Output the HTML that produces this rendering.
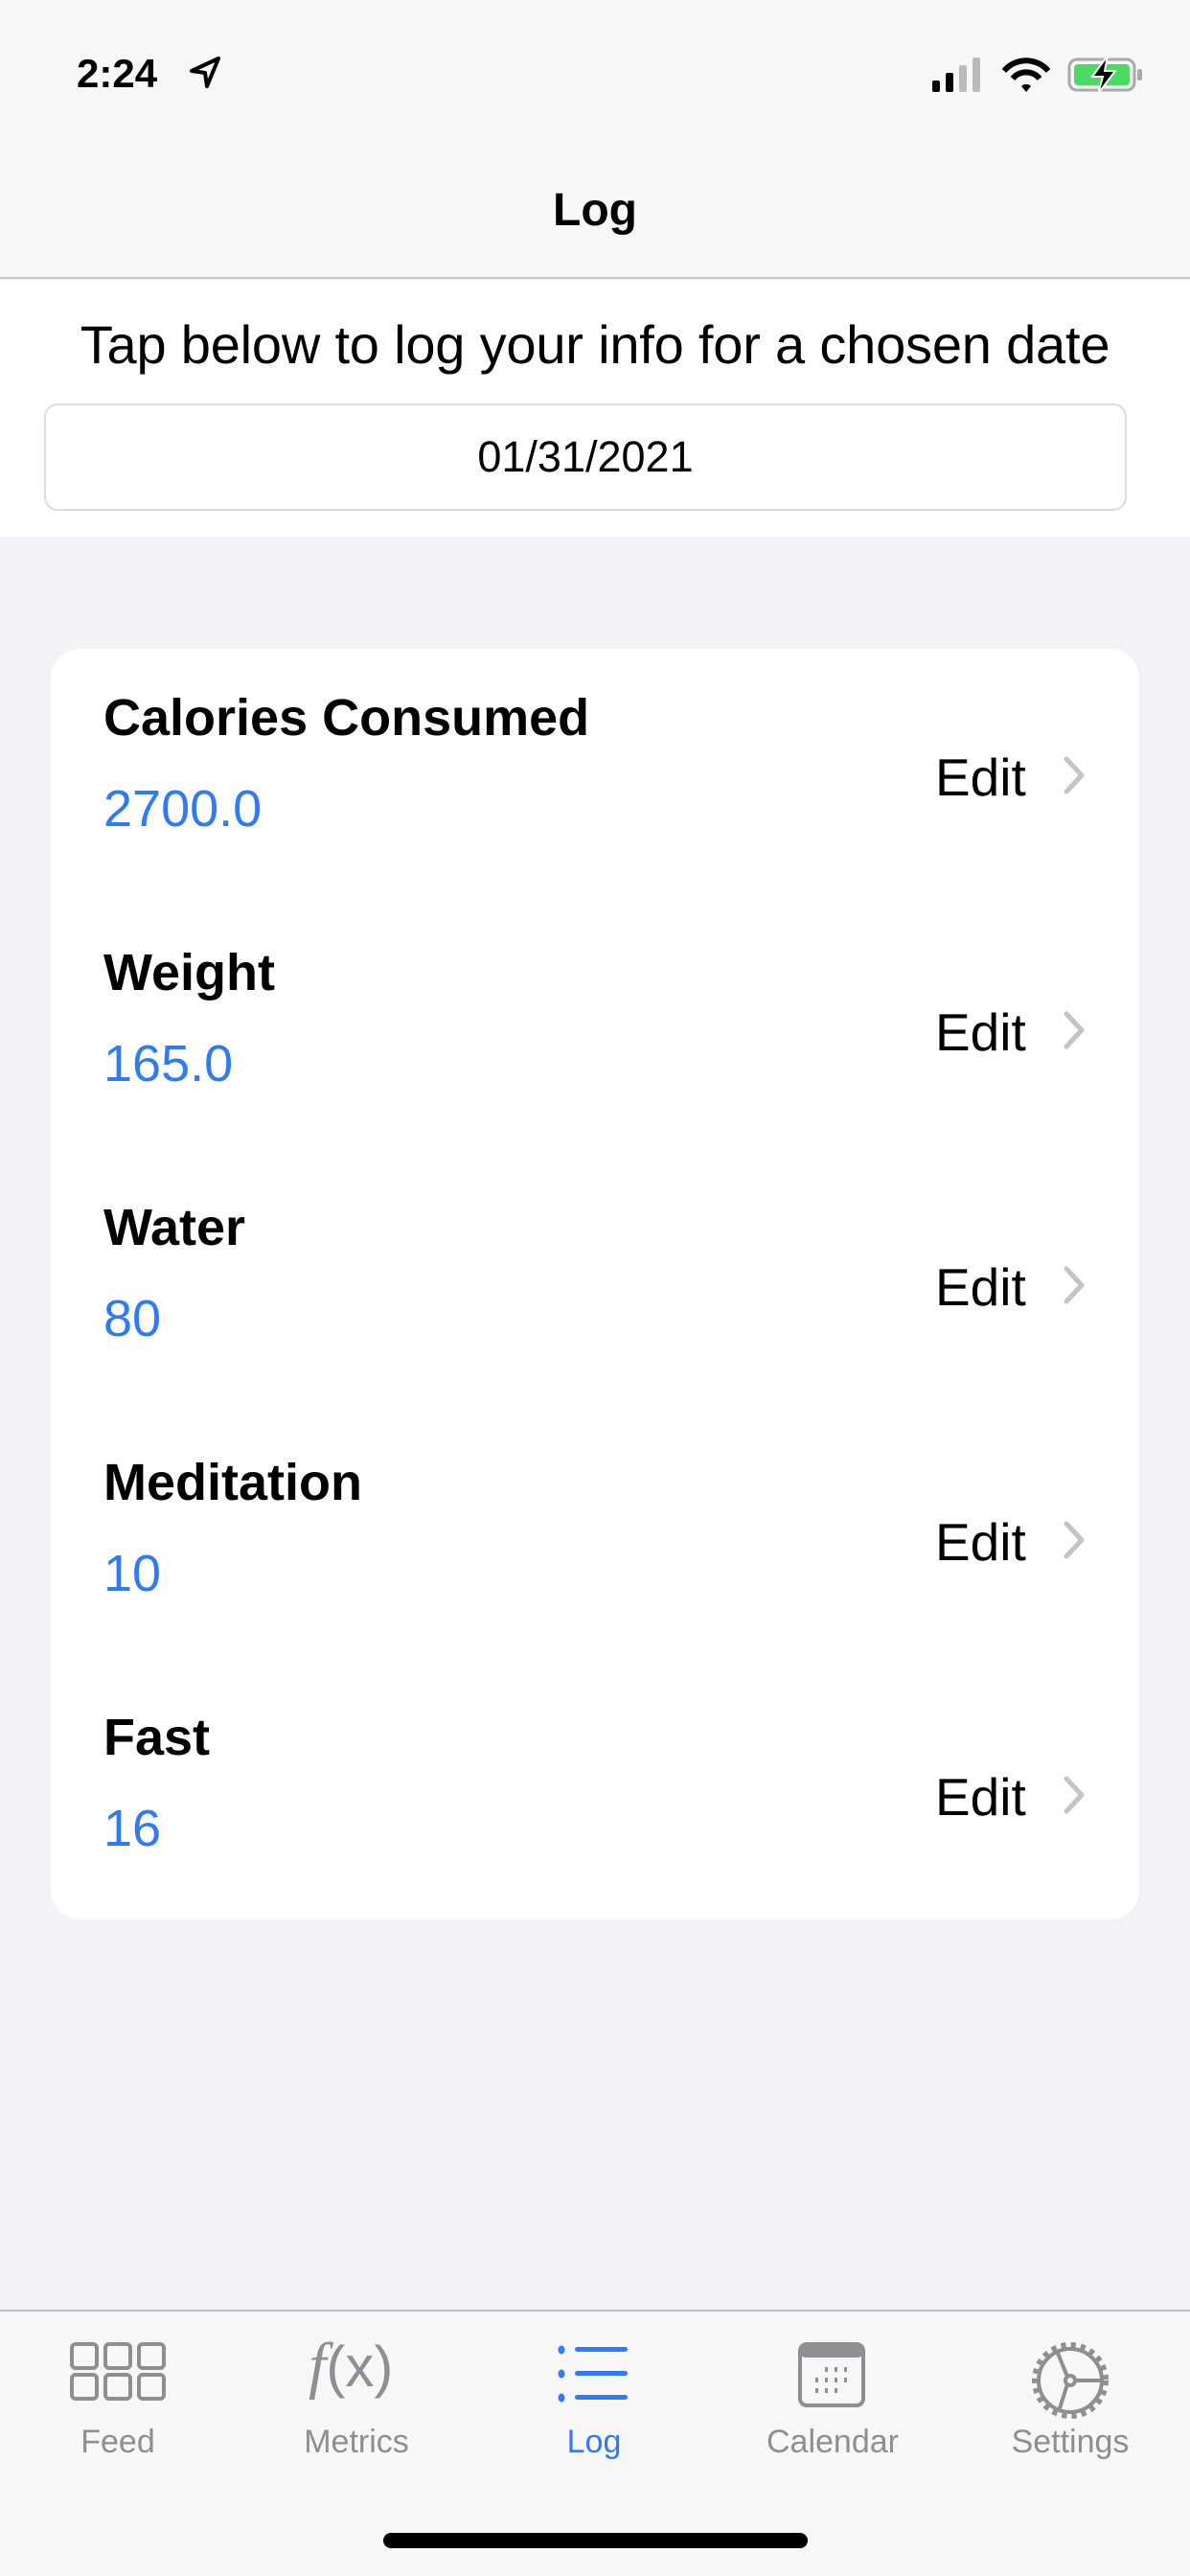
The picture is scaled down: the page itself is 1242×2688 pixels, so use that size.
<!DOCTYPE html>
<html><head><meta charset="utf-8"><style>
*{margin:0;padding:0;box-sizing:border-box}
body{width:1242px;height:2688px;background:#f2f2f7;font-family:"Liberation Sans",sans-serif;position:relative;overflow:hidden}
.a{position:absolute;white-space:nowrap}
.t{font-weight:bold;font-size:54px;color:#000;left:108px;line-height:1}
.v{font-size:54px;color:#2f7bf5;left:108px;line-height:1}
.e{font-size:55px;color:#000;left:976px;line-height:1}
.lab{font-size:34px;color:#8e8e93;line-height:1;transform:translateX(-50%)}
</style></head><body>
<div class="a" style="left:0;top:0;width:1242px;height:291px;background:#f7f7f7;border-bottom:2px solid #c8c8cc"></div>
<div class="a" style="left:80px;top:56px;font-size:42px;font-weight:bold;line-height:1">2:24</div>
<svg class="a" style="left:196px;top:58px" width="36" height="36" viewBox="0 0 36 36"><path d="M32 3 L4 16 L18 18 L20 32 Z" fill="none" stroke="#000" stroke-width="4" stroke-linejoin="round"/></svg>
<svg class="a" style="left:970px;top:56px" width="230" height="42" viewBox="0 0 230 42">
<rect x="3" y="28" width="8" height="12" rx="2" fill="#000"/><rect x="17" y="20" width="8" height="20" rx="2" fill="#000"/><rect x="31" y="12" width="8" height="28" rx="2" fill="#bbb"/><rect x="45" y="4" width="8" height="36" rx="2" fill="#bbb"/>
<path d="M78 18 A30 30 0 0 1 124 18" stroke="#000" stroke-width="6" fill="none"/><path d="M87 26 A18 18 0 0 1 115 26" stroke="#000" stroke-width="6" fill="none"/><path d="M96 34 L101 40 L106 34 A7 7 0 0 0 96 34Z" fill="#000"/>
<rect x="146" y="6" width="68" height="32" rx="8" fill="none" stroke="#aaa" stroke-width="3"/><rect x="151" y="11" width="58" height="22" rx="4" fill="#4cd964"/><rect x="217" y="16" width="5" height="12" rx="2" fill="#aaa"/>
<path d="M186 2 L170 24 L181 24 L176 42 L194 18 L183 18 Z" fill="#000" stroke="#f7f7f7" stroke-width="2"/></svg>
<div class="a" style="left:0;width:1242px;top:196px;text-align:center;font-size:48px;font-weight:bold;line-height:1">Log</div>
<div class="a" style="left:0;top:293px;width:1242px;height:267px;background:#fff"></div>
<div class="a" style="left:0;width:1242px;top:332px;text-align:center;font-size:56px;line-height:1;letter-spacing:-0.2px">Tap below to log your info for a chosen date</div>
<div class="a" style="left:46px;top:421px;width:1130px;height:112px;border:2px solid #dcdcdc;border-radius:14px;background:#fff;text-align:center;font-size:45px;line-height:108px">01/31/2021</div>
<div class="a" style="left:53px;top:677px;width:1136px;height:1326px;background:#fff;border-radius:30px"></div>

<div class="a t" style="top:722px">Calories Consumed</div><div class="a v" style="top:817px">2700.0</div><div class="a e" style="top:784px">Edit</div>
<div class="a t" style="top:988px">Weight</div><div class="a v" style="top:1083px">165.0</div><div class="a e" style="top:1050px">Edit</div>
<div class="a t" style="top:1254px">Water</div><div class="a v" style="top:1349px">80</div><div class="a e" style="top:1316px">Edit</div>
<div class="a t" style="top:1520px">Meditation</div><div class="a v" style="top:1615px">10</div><div class="a e" style="top:1582px">Edit</div>
<div class="a t" style="top:1786px">Fast</div><div class="a v" style="top:1881px">16</div><div class="a e" style="top:1848px">Edit</div>
<svg class="a" style="left:1105px;top:788px" width="32" height="1110" viewBox="0 0 32 1110" fill="none" stroke="#c4c4c7" stroke-width="5" stroke-linecap="round" stroke-linejoin="round">
<path d="M8 4 L24 21 L8 38"/><path d="M8 270 L24 287 L8 304"/><path d="M8 536 L24 553 L8 570"/><path d="M8 802 L24 819 L8 836"/><path d="M8 1068 L24 1085 L8 1102"/></svg>

<div class="a" style="left:0;top:2410px;width:1242px;height:278px;background:#f7f7f7;border-top:2px solid #c0c0c4"></div>
<svg class="a" style="left:72px;top:2443px" width="102" height="62" viewBox="0 0 102 62" fill="none" stroke="#8e8e93" stroke-width="4"><rect x="3" y="3" width="26" height="25" rx="4"/><rect x="38" y="3" width="26" height="25" rx="4"/><rect x="73" y="3" width="26" height="25" rx="4"/><rect x="3" y="35" width="26" height="25" rx="4"/><rect x="38" y="35" width="26" height="25" rx="4"/><rect x="73" y="35" width="26" height="25" rx="4"/></svg>
<div class="a" style="left:322px;top:2436px;font-family:'Liberation Serif',serif;font-style:italic;font-size:66px;color:#8e8e93;line-height:1">f<span style="font-family:'Liberation Sans',sans-serif;font-style:normal;font-size:60px">(x)</span></div>
<svg class="a" style="left:582px;top:2446px" width="76" height="62" viewBox="0 0 76 62"><g fill="#2f7bf5"><ellipse cx="4" cy="6" rx="3.5" ry="4.5"/><ellipse cx="4" cy="31" rx="3.5" ry="4.5"/><ellipse cx="4" cy="56" rx="3.5" ry="4.5"/><rect x="18" y="3" width="55" height="5" rx="2.5"/><rect x="18" y="28" width="55" height="5" rx="2.5"/><rect x="18" y="53" width="55" height="5" rx="2.5"/></g></svg>
<svg class="a" style="left:833px;top:2444px" width="70" height="68" viewBox="0 0 70 68"><rect x="2" y="2" width="66" height="64" rx="7" fill="none" stroke="#8e8e93" stroke-width="4"/><rect x="2" y="2" width="66" height="14" rx="6" fill="#8e8e93"/><g fill="#8e8e93"><rect x="28" y="26" width="3" height="5"/><rect x="38" y="26" width="3" height="5"/><rect x="48" y="26" width="3" height="5"/><rect x="18" y="37" width="3" height="5"/><rect x="28" y="37" width="3" height="5"/><rect x="38" y="37" width="3" height="5"/><rect x="48" y="37" width="3" height="5"/><rect x="18" y="48" width="3" height="5"/><rect x="28" y="48" width="3" height="5"/><rect x="38" y="48" width="3" height="5"/></g></svg>
<svg class="a" style="left:1075px;top:2442px" width="84" height="84" viewBox="0 0 84 84" fill="none" stroke="#8e8e93" stroke-width="4"><circle cx="42" cy="42" r="36" stroke-dasharray="5 5" stroke-width="8"/><circle cx="42" cy="42" r="33"/><circle cx="42" cy="42" r="5"/><path d="M47 42 L75 42 M39 38 L28 11 M39 46 L30 74"/></svg>
<div class="a lab" style="left:123px;top:2531px">Feed</div>
<div class="a lab" style="left:372px;top:2531px">Metrics</div>
<div class="a lab" style="left:620px;top:2531px;color:#2f7bf5">Log</div>
<div class="a lab" style="left:869px;top:2531px">Calendar</div>
<div class="a lab" style="left:1117px;top:2531px">Settings</div>
<div class="a" style="left:400px;top:2643px;width:443px;height:16px;border-radius:8px;background:#000"></div>
</body></html>
